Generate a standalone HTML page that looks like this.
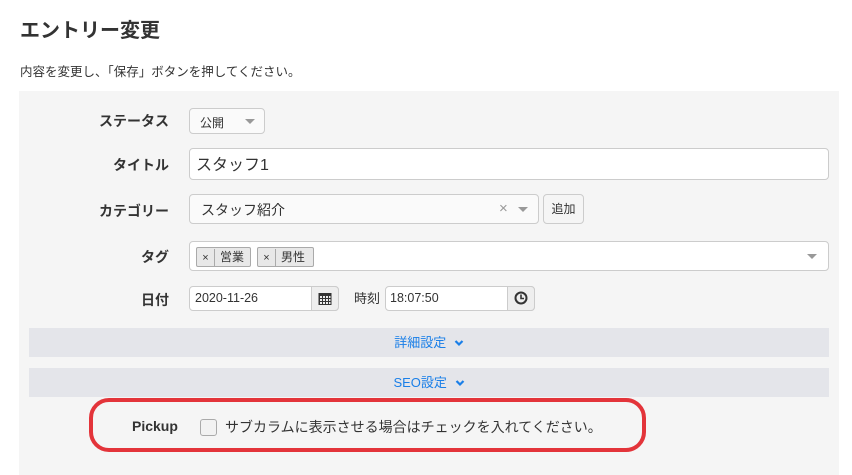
<!DOCTYPE html>
<html><head><meta charset="utf-8"><style>
*{box-sizing:border-box;margin:0;padding:0}
body{width:852px;height:475px;background:#fff;font-family:"Liberation Sans","Noto Sans CJK JP",sans-serif;color:#333;position:relative;overflow:hidden}
.a{position:absolute}
.lbl{position:absolute;font-weight:bold;font-size:14px;text-align:right;width:150px;left:19px}
.box{position:absolute;background:#fff;border:1px solid #ccc;border-radius:4px}
.bar{position:absolute;left:29px;width:800px;height:29px;background:#e4e5ea;color:#1a7fe8;font-size:13px;text-align:center;line-height:29px}
.tri{position:absolute;width:0;height:0;border-left:5px solid transparent;border-right:5px solid transparent;border-top:5px solid #999}
.addon{position:absolute;top:-1px;bottom:-1px;width:28px;background:#eee;border:1px solid #ccc;border-radius:0 4px 4px 0}
.tag{position:absolute;top:5px;height:20px;border:1px solid #aaa;background:#e8e8e8;border-radius:2px;font-size:12px;line-height:18px}
</style></head><body>
<div class="a" style="left:20px;top:14px;font-size:20px;font-weight:bold;color:#333">エントリー変更</div>
<div class="a" style="left:20px;top:61px;font-size:12.5px">内容を変更し、「保存」ボタンを押してください。</div>
<div class="a" style="left:19px;top:91px;width:820px;height:384px;background:#f5f5f5"></div>

<div class="lbl" style="top:111px">ステータス</div>
<div class="box" style="left:189px;top:108px;width:76px;height:26px;background:#fafafa"><span class="a" style="left:10px;top:5px;font-size:12px">公開</span><div class="tri" style="left:55px;top:10px"></div></div>

<div class="lbl" style="top:155px">タイトル</div>
<div class="box" style="left:189px;top:148px;width:640px;height:32px"><span class="a" style="left:6px;top:2px;font-size:16px">スタッフ1</span></div>

<div class="lbl" style="top:201px">カテゴリー</div>
<div class="box" style="left:189px;top:194px;width:350px;height:30px;background:#fafafa"><span class="a" style="left:11px;top:5px;font-size:14px">スタッフ紹介</span><span class="a" style="left:309px;top:5px;font-size:15px;color:#999">×</span><div class="tri" style="left:328px;top:12px"></div></div>
<div class="box" style="left:543px;top:194px;width:41px;height:30px;background:#f5f5f5;font-size:12px;text-align:center;line-height:28px">追加</div>

<div class="lbl" style="top:247px">タグ</div>
<div class="box" style="left:189px;top:241px;width:640px;height:30px">
 <div class="tag" style="left:6px;width:55px"><span style="display:inline-block;width:18px;text-align:center;border-right:1px solid #aaa;font-size:11px">×</span><span style="padding-left:5px">営業</span></div>
 <div class="tag" style="left:67px;width:57px"><span style="display:inline-block;width:18px;text-align:center;border-right:1px solid #aaa;font-size:11px">×</span><span style="padding-left:5px">男性</span></div>
 <div class="tri" style="left:617px;top:12px"></div>
</div>

<div class="lbl" style="top:290px">日付</div>
<div class="box" style="left:189px;top:286px;width:150px;height:25px"><span class="a" style="left:5px;top:4px;font-size:12.5px">2020-11-26</span>
 <div class="addon" style="right:-1px"><svg class="a" style="left:6px;top:5px" width="14" height="13" viewBox="0 0 14 13"><rect x="0.5" y="1" width="13" height="12" fill="#333"/><g fill="#eee"><rect x="2" y="4" width="2" height="2"/><rect x="5" y="4" width="2" height="2"/><rect x="8" y="4" width="2" height="2"/><rect x="11" y="4" width="1.5" height="2"/><rect x="2" y="7" width="2" height="2"/><rect x="5" y="7" width="2" height="2"/><rect x="8" y="7" width="2" height="2"/><rect x="11" y="7" width="1.5" height="2"/><rect x="2" y="10" width="2" height="2"/><rect x="5" y="10" width="2" height="2"/><rect x="8" y="10" width="2" height="2"/><rect x="11" y="10" width="1.5" height="2"/></g></svg></div></div>
<div class="a" style="left:354px;top:288px;font-size:13px">時刻</div>
<div class="box" style="left:385px;top:286px;width:150px;height:25px"><span class="a" style="left:4px;top:4px;font-size:12.5px">18:07:50</span>
 <div class="addon" style="right:-1px"><svg class="a" style="left:6px;top:4px" width="14" height="14" viewBox="0 0 14 14"><circle cx="7" cy="7" r="5.5" fill="none" stroke="#333" stroke-width="2"/><path d="M7 3.5V7.5H10" fill="none" stroke="#333" stroke-width="1.6"/></svg></div></div>

<div class="bar" style="top:328px">詳細設定 <svg width="10" height="8" viewBox="0 0 10 8" style="margin-left:4px"><path d="M1.5 2l3.5 3.5L8.5 2" fill="none" stroke="#1a7fe8" stroke-width="2.2"/></svg></div>
<div class="bar" style="top:368px">SEO設定 <svg width="10" height="8" viewBox="0 0 10 8" style="margin-left:4px"><path d="M1.5 2l3.5 3.5L8.5 2" fill="none" stroke="#1a7fe8" stroke-width="2.2"/></svg></div>

<div class="a" style="left:89px;top:398px;width:557px;height:54px;border:4px solid #e3343a;border-radius:20px"></div>
<div class="a" style="left:132px;top:418px;font-size:14px;font-weight:bold">Pickup</div>
<div class="a" style="left:200px;top:419px;width:17px;height:17px;border:1px solid #aaa;border-radius:3px;background:#f2f2f2"></div>
<div class="a" style="left:225px;top:417px;font-size:14px">サブカラムに表示させる場合はチェックを入れてください。</div>
</body></html>
